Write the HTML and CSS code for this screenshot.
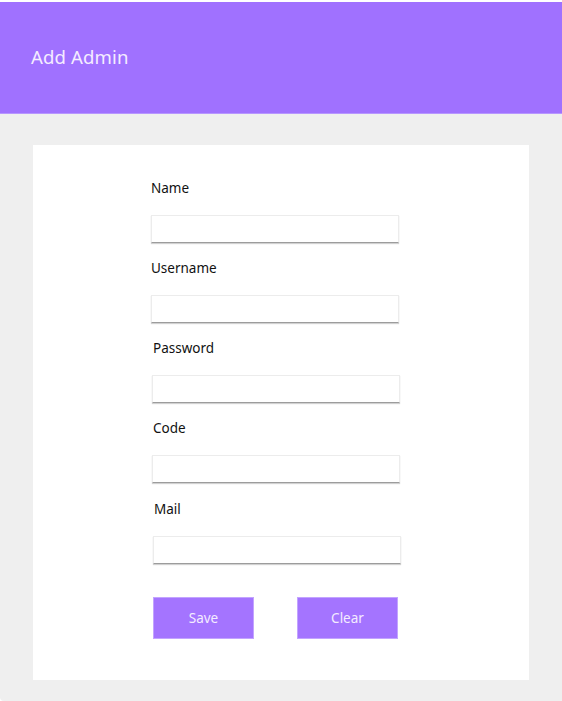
FILE: index.html
```html
<!DOCTYPE html>
<html lang="en">
<head>
<meta charset="utf-8">
<title>Add Admin</title>
<link rel="stylesheet" href="styles.css">
</head>
<body>
<div class="app">
  <header class="topbar">
    <h1 class="title">Add Admin</h1>
  </header>
  <main class="content">
    <section class="card">
      <form class="form">
        <div class="field">
          <label class="label" for="name">Name</label>
          <input class="input" id="name" type="text">
        </div>
        <div class="field">
          <label class="label" for="username">Username</label>
          <input class="input" id="username" type="text">
        </div>
        <div class="field shift1">
          <label class="label lshift" for="password">Password</label>
          <input class="input" id="password" type="password">
        </div>
        <div class="field shift1 extra">
          <label class="label lshift" for="code">Code</label>
          <input class="input" id="code" type="text">
        </div>
        <div class="field shift2 extra">
          <label class="label lshift" for="mail">Mail</label>
          <input class="input" id="mail" type="email">
        </div>
        <div class="actions">
          <button class="btn btn-save" type="button">Save</button>
          <button class="btn btn-clear" type="reset">Clear</button>
        </div>
      </form>
    </section>
  </main>
</div>
</body>
</html>
```
FILE: styles.css
```css
* { box-sizing: border-box; }
html, body { margin: 0; padding: 0; }
body {
  background: #ffffff;
  font-family: "Noto Sans", "Open Sans", "Liberation Sans", sans-serif;
  color: #1a1a1a;
}
.app {
  padding-top: 2px;
  height: 701px;
  display: flex;
  flex-direction: column;
}
.topbar {
  height: 112px;
  background: #a071ff;
  border-bottom: 1px solid #b796ff;
  display: flex;
  align-items: center;
  padding-left: 31px;
}
.title {
  margin: 0 0 2px 0;
  font-size: 18.6px;
  font-weight: 400;
  color: #f4ecff;
  letter-spacing: 0.1px;
}
.content {
  flex: 1;
  background: #efefef;
  padding: 31px 33px 21px 33px;
  border-bottom-left-radius: 4px;
}
.card {
  background: #ffffff;
  height: 535px;
  padding: 33px 0 0 118px;
}
.form {
  display: flex;
  flex-direction: column;
  width: 260px;
}
.field {
  display: flex;
  flex-direction: column;
  align-items: flex-start;
  height: 80px;
}
.field.extra { height: 81px; }
.label {
  font-size: 13.5px;
  line-height: 20px;
  height: 20px;
  margin-bottom: 17px;
  color: #111;
}
.lshift { margin-left: 2px; }
.shift1 .input { margin-left: 1px; }
.shift2 .input { margin-left: 2px; }
.shift2 .lshift { margin-left: 3px; }
.input {
  width: 248px;
  height: 28px;
  border: 1px solid #ececec;
  border-bottom: 1px solid #9c9c9c;
  box-shadow: 0 1px 1px rgba(0,0,0,0.18);
  background: #fff;
  padding: 0 6px;
  font: inherit;
  outline: none;
}
.actions {
  display: flex;
  gap: 43px;
  margin-top: 17px;
  padding-left: 2px;
}
.btn {
  height: 42px;
  background: #a474ff;
  border: 1px solid #c3a4ff;
  color: #f4ecff;
  font-family: inherit;
  font-size: 13.5px;
  padding: 0;
  cursor: pointer;
}
.btn-save { width: 101px; }
.btn-clear { width: 101px; }
```
